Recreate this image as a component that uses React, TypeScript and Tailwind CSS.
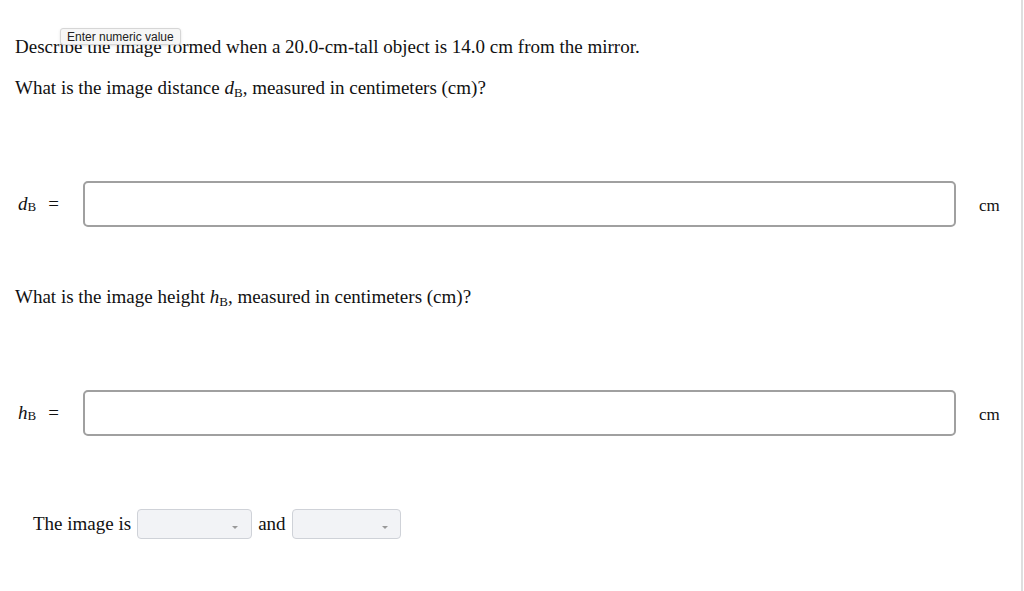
export default function App() {
  const serif = { fontFamily: '"Liberation Serif", "Times New Roman", serif' };
  return (
    <div className="w-[1024px] h-[591px] bg-white overflow-hidden flex">
      <div className="relative flex-1 text-[19px] text-[#111] pl-[15px] pt-[36px]" style={serif}>
        <div
          className="absolute left-[60px] top-[28px] px-[6px] h-[17px] flex items-center text-[12px] text-[#222] bg-[#f6f6f6] border border-[#d6d6d6] rounded-[3px] shadow-sm"
          style={{ fontFamily: '"Liberation Sans", Arial, sans-serif' }}
        >
          Enter numeric value
        </div>
        <p className="leading-[22px]">Describe the image formed when a 20.0-cm-tall object is 14.0 cm from the mirror.</p>
        <p className="leading-[22px] mt-[19px]">
          What is the image distance <i>d</i>
          <sub className="text-[13px]">B</sub>, measured in centimeters (cm)?
        </p>

        <div className="flex items-center mt-[82px] h-[46px]">
          <div className="w-[68px] pl-[3px] flex items-center">
            <i>d</i>
            <sub className="text-[13px]">B</sub>
            <span className="ml-[12px]">=</span>
          </div>
          <input className="w-[873px] h-[46px] border-2 border-[#a0a0a0] rounded-[5px] outline-none" />
          <span className="ml-[23px] text-[17px] mt-[4px]">cm</span>
        </div>

        <p className="leading-[22px] mt-[59px]">
          What is the image height <i>h</i>
          <sub className="text-[13px]">B</sub>, measured in centimeters (cm)?
        </p>

        <div className="flex items-center mt-[82px] h-[46px]">
          <div className="w-[68px] pl-[3px] flex items-center">
            <i>h</i>
            <sub className="text-[13px]">B</sub>
            <span className="ml-[12px]">=</span>
          </div>
          <input className="w-[873px] h-[46px] border-2 border-[#a0a0a0] rounded-[5px] outline-none" />
          <span className="ml-[23px] text-[17px] mt-[4px]">cm</span>
        </div>

        <div className="flex items-center mt-[73px] pl-[18px]">
          <span>The image is</span>
          <div className="relative ml-[6px] w-[115px] h-[30px] bg-[#f2f3f6] border border-[#cfd2d8] rounded-[4px]">
            <span className="absolute right-[13px] top-[16px] w-0 h-0 border-l-[3px] border-r-[3px] border-t-[3px] border-l-transparent border-r-transparent border-t-[#999]" />
          </div>
          <span className="ml-[6px] mr-[6px]">and</span>
          <div className="relative w-[109px] h-[30px] bg-[#f2f3f6] border border-[#cfd2d8] rounded-[4px]">
            <span className="absolute right-[12px] top-[16px] w-0 h-0 border-l-[3px] border-r-[3px] border-t-[3px] border-l-transparent border-r-transparent border-t-[#999]" />
          </div>
        </div>
      </div>
      <div className="w-[2px] bg-[#dedede] mr-[1px]" />
    </div>
  );
}
